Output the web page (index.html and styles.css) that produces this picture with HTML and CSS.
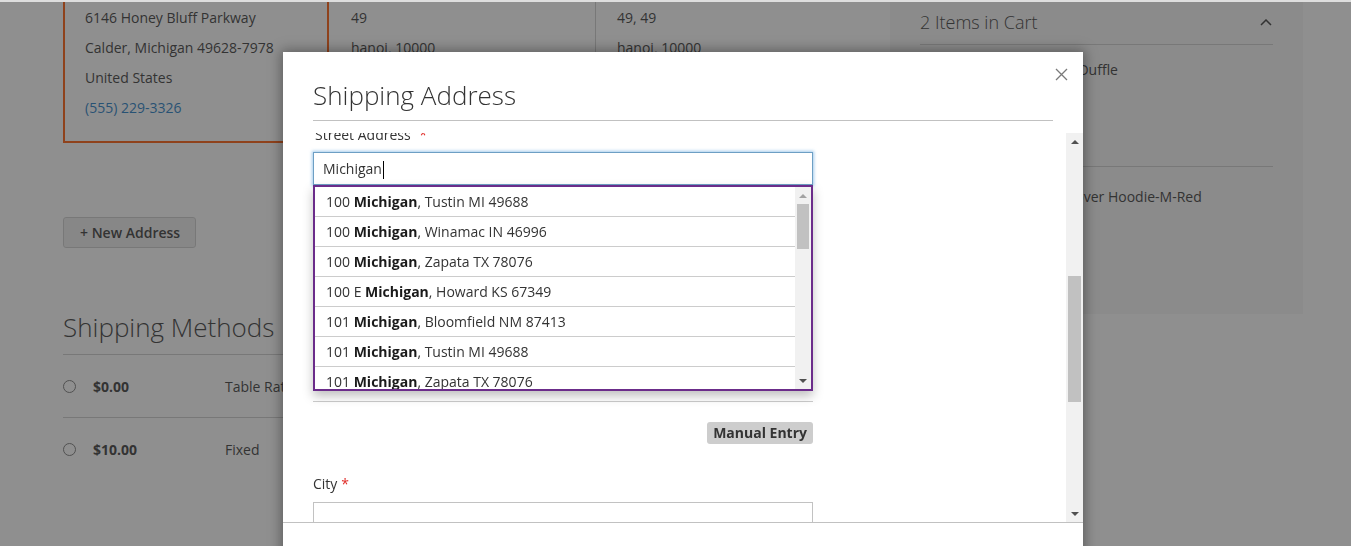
FILE: index.html
```html
<!DOCTYPE html>
<html lang="en">
  <head>
    <meta charset="utf-8" />
    <title>Checkout - Shipping</title>
    <link rel="stylesheet" href="styles.css">
  </head>
  <body>
    <div class="page">
      <div class="main">
        <div class="addresses">
          <div class="address selected">
            6146 Honey Bluff Parkway<br>
            Calder, Michigan 49628-7978<br>
            United States<br>
            <a href="#">(555) 229-3326</a>
          </div>
          <div class="address">
            49<br>
            hanoi, 10000<br>
            Vietnam<br>
            <a href="#">0987654321</a>
          </div>
          <div class="address sep">
            49, 49<br>
            hanoi, 10000<br>
            Vietnam<br>
            <a href="#">0987654321</a>
          </div>
        </div>
        <button class="new-address">+ New Address</button>
        <h2 class="step-title">Shipping Methods</h2>
        <div class="method-row">
          <span class="radio"></span><span class="price">$0.00</span><span>Table Rate</span>
        </div>
        <div class="method-row">
          <span class="radio"></span><span class="price">$10.00</span><span>Fixed</span>
        </div>
      </div>
      <aside class="summary">
        <div class="summary-title">
          <span>2 Items in Cart</span>
          <svg width="12" height="7" viewBox="0 0 12 7"><polyline points="1,6 6,1 11,6" fill="none" stroke="#333" stroke-width="1.5"/></svg>
        </div>
        <div class="cart-item">
          <div class="thumb"></div>
          <div class="name">Overnight Duffle</div>
        </div>
        <div class="cart-item">
          <div class="thumb"></div>
          <div class="name">Teton Pullover Hoodie-M-Red</div>
        </div>
      </aside>
    </div>

    <div class="overlay"></div>

    <div class="modal">
      <header class="modal-header">
        <h1 class="modal-title">Shipping Address</h1>
        <button class="modal-close">
          <svg width="13" height="13" viewBox="0 0 13 13"><path d="M1 1L12 12M12 1L1 12" stroke="#7a7a7a" stroke-width="1.3"/></svg>
        </button>
      </header>
      <div class="modal-scroll">
        <div class="modal-content">
          <div class="form">
            <div class="field">
              <label class="label street">Street Address <span class="req">*</span></label>
              <div class="control">
                <div class="input focus">Michigan<span class="caret"></span></div>
                <div class="suggest">
                  <ul>
                    <li>100 <b>Michigan</b>, Tustin MI 49688</li>
                    <li>100 <b>Michigan</b>, Winamac IN 46996</li>
                    <li>100 <b>Michigan</b>, Zapata TX 78076</li>
                    <li>100 E <b>Michigan</b>, Howard KS 67349</li>
                    <li>101 <b>Michigan</b>, Bloomfield NM 87413</li>
                    <li>101 <b>Michigan</b>, Tustin MI 49688</li>
                    <li>101 <b>Michigan</b>, Zapata TX 78076</li>
                  </ul>
                  <div class="scrollbar small">
                    <div class="sb-arrow"><svg width="8" height="4" viewBox="0 0 8 4"><polygon points="0,4 8,4 4,0" fill="#a3a3a3"/></svg></div>
                    <div class="sb-thumb"></div>
                    <div class="sb-fill"></div>
                    <div class="sb-arrow"><svg width="8" height="4" viewBox="0 0 8 4"><polygon points="0,0 8,0 4,4" fill="#505050"/></svg></div>
                  </div>
                </div>
              </div>
            </div>
            <div class="spacer"></div>
            <div class="manual-row"><button class="manual">Manual Entry</button></div>
            <div class="field city">
              <label class="label">City<span class="req">*</span></label>
              <div class="input"></div>
            </div>
          </div>
        </div>
        <div class="scrollbar">
          <div class="sb-arrow"><svg width="8" height="4" viewBox="0 0 8 4"><polygon points="0,4 8,4 4,0" fill="#505050"/></svg></div>
          <div class="sb-thumb"></div>
          <div class="sb-fill"></div>
          <div class="sb-arrow"><svg width="8" height="4" viewBox="0 0 8 4"><polygon points="0,0 8,0 4,4" fill="#505050"/></svg></div>
        </div>
      </div>
      <footer class="modal-footer"></footer>
    </div>
  </body>
</html>
```

FILE: styles.css
```css
* {box-sizing: border-box}
body {
  margin: 0;
  height: 546px;
  overflow: hidden;
  border-top: 2px solid #dedede;
  background: #fff;
  color: #333;
  font-family: "Open Sans", "Liberation Sans", sans-serif;
  font-size: 14px;
}
a {color: #1979c3; text-decoration: none}
button {font-family: inherit; cursor: pointer}

/* page behind the popup */
.page {
  display: flex;
  gap: 20px;
  padding: 0 48px 0 63px;
}
.main {width: 807px; flex: none}
.addresses {display: flex; margin-top: -22px}
.address {
  width: 266px;
  padding: 21px 20px 18px;
  border: 2px solid transparent;
  line-height: 30px;
}
.address.selected {border-color: #ff5501}
.address.sep {border-left: 1px solid #ccc; padding-left: 21px}
.new-address {
  display: block;
  margin-top: 74px;
  height: 31px;
  padding: 0 15px 0 16px;
  border: 1px solid #cdcdcd;
  border-radius: 3px;
  background: #eee;
  color: #333;
  font-size: 14px;
  font-weight: 600;
}
.step-title {
  margin: 63px 0 0;
  padding-bottom: 11px;
  border-bottom: 1px solid #ccc;
  font-size: 26px;
  font-weight: 300;
  line-height: 32px;
}
.method-row {
  display: grid;
  grid-template-columns: 30px 132px 1fr;
  align-items: center;
  height: 63px;
  border-bottom: 1px solid #ccc;
}
.method-row:last-child {border-bottom: 0}
.radio {
  width: 13px;
  height: 13px;
  border: 1px solid #767676;
  border-radius: 50%;
}
.price {font-weight: 700}

.summary {
  width: 413px;
  height: 312px;
  flex: none;
  padding: 8px 30px 0;
  background: #f5f5f5;
}
.summary-title {
  display: flex;
  justify-content: space-between;
  align-items: center;
  padding: 0 1px 10px 0;
  border-bottom: 1px solid #ccc;
  font-size: 18px;
  font-weight: 300;
  line-height: 24px;
}
.cart-item {
  display: flex;
  gap: 15px;
  height: 122px;
  padding-top: 15px;
  border-bottom: 1px solid #ccc;
}
.cart-item + .cart-item {padding-top: 20px; border-bottom: 0}
.thumb {width: 75px; height: 75px; background: #e8e8e8}
.name {line-height: 20px}

.overlay {
  position: fixed;
  top: 2px;
  left: 0;
  right: 0;
  bottom: 0;
  background: rgba(51, 51, 51, 0.55);
  z-index: 5;
}

/* popup */
.modal {
  position: fixed;
  top: 52px;
  left: 283px;
  width: 800px;
  height: 560px;
  display: flex;
  flex-direction: column;
  background: #fff;
  box-shadow: 0 0 12px 2px rgba(0, 0, 0, 0.35);
  z-index: 10;
}
.modal-header {position: relative; padding: 27px 30px 12px}
.modal-title {
  margin: 0;
  padding-bottom: 9px;
  border-bottom: 1px solid #c1c1c1;
  font-size: 26px;
  font-weight: 300;
  line-height: 32px;
}
.modal-close {
  position: absolute;
  top: 10px;
  right: 10px;
  width: 24px;
  height: 24px;
  padding: 0;
  border: 0;
  background: none;
  display: flex;
  align-items: center;
  justify-content: center;
}
.modal-scroll {display: flex; height: 389px; flex: none}
.modal-content {flex: 1; overflow: hidden; padding-left: 30px}
.modal-footer {flex: 1; border-top: 1px solid #c1c1c1}

.form {width: 500px; margin-top: -8px}
.label {display: block; line-height: 20px; margin-bottom: 7px}
.label.street {padding-left: 2px}
.req {color: #e02b27; margin-left: 4px}
.street .req {margin-left: 5px}
.control {position: relative}
.input {
  height: 33px;
  padding: 0 9px;
  border: 1px solid #c2c2c2;
  background: #fff;
  line-height: 31px;
}
.input.focus {
  border-color: #6d9fc4;
  box-shadow: 0 0 3px 1px rgba(104, 168, 224, 0.6);
}
.caret {
  display: inline-block;
  width: 1px;
  height: 18px;
  margin-left: 1px;
  background: #000;
  vertical-align: middle;
}
.suggest {
  position: absolute;
  top: 100%;
  left: 0;
  right: 0;
  height: 206px;
  display: flex;
  border: 2px solid #6b2c8a;
  background: #fff;
  box-shadow: 0 5px 10px rgba(0, 0, 0, 0.25);
  z-index: 2;
}
.suggest ul {
  flex: 1;
  margin: 0;
  padding: 0;
  list-style: none;
  overflow: hidden;
}
.suggest li {
  height: 30px;
  padding-left: 11px;
  border-bottom: 1px solid #ccc;
  line-height: 29px;
}
.suggest b {color: #1a1a1a}
.spacer {height: 217px; border-bottom: 1px solid #ccc}
.manual-row {display: flex; justify-content: flex-end; margin-top: 20px}
.manual {
  height: 22px;
  padding: 0 6px;
  border: 0;
  border-radius: 3px;
  background: #cdcdcd;
  color: #333;
  font-size: 14px;
  font-weight: 700;
  line-height: 22px;
}
.field.city {margin-top: 30px}
.field.city .label {margin-bottom: 8px}

/* scrollbars drawn like the browser ones */
.scrollbar {
  width: 17px;
  flex: none;
  display: flex;
  flex-direction: column;
  align-items: center;
  background: #f1f1f1;
}
.sb-arrow {
  width: 100%;
  height: 17px;
  flex: none;
  display: flex;
  align-items: center;
  justify-content: center;
}
.sb-thumb {width: 13px; height: 126px; margin-top: 126px; flex: none; background: #c1c1c1}
.sb-fill {flex: 1}
.scrollbar.small {width: 16px}
.scrollbar.small .sb-thumb {height: 45px; margin-top: 0; width: 12px}
```
